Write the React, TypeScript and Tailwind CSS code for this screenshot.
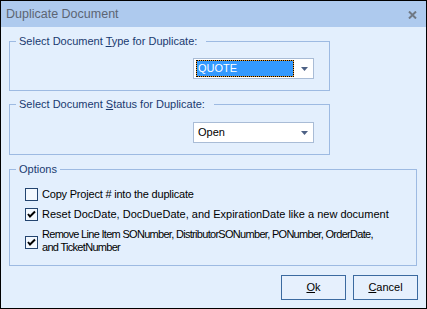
import React from "react";

const font = { fontFamily: '"Liberation Sans", Arial, sans-serif' };

function Arrow() {
  return (
    <svg width="7" height="4" viewBox="0 0 7 4" className="block">
      <path d="M0 0 H7 L3.5 4 Z" fill="#4d6185" />
    </svg>
  );
}

function Check({ checked }: { checked: boolean }) {
  return (
    <div className="w-[13px] h-[13px] shrink-0 border border-[#23446f] bg-[#f3f8fe] flex items-center justify-center">
      {checked && (
        <svg width="9" height="9" viewBox="0 0 9 9" className="block">
          <path d="M1 4 L3 6.5 L8 1.5" stroke="#000" strokeWidth="2" fill="none" />
        </svg>
      )}
    </div>
  );
}

export default function App() {
  return (
    <div
      className="w-[427px] h-[309px] border border-black bg-[#e3effd] flex flex-col text-[11px] leading-[13px]"
      style={font}
    >
      <div className="h-[26px] shrink-0 bg-[#aecaee] flex items-center justify-between pl-[5px] pr-[9px]">
        <span className="text-[12.5px] text-[#5c6573] pt-[1px]">Duplicate Document</span>
        <svg width="9" height="8" viewBox="0 0 9 8" className="block mt-[1px]">
          <path d="M1 0.5 L8 7.5 M8 0.5 L1 7.5" stroke="#6f7884" strokeWidth="2" />
        </svg>
      </div>

      <div className="flex flex-col pl-[8px] pr-[7px] pt-[8px]">
        <fieldset className="w-[321px] h-[56px] border border-[#9dbae2] px-[6px]">
          <legend className="pl-[3px] pr-[9px] text-[#1a3a70]">
            Select Document <span className="underline">T</span>ype for Duplicate:
          </legend>
          <div className="ml-[177px] mt-[10px] w-[121px] h-[21px] border border-[#a9bcd6] bg-white flex items-center pl-[2px] pr-[5px]">
            <div className="w-[98px] h-[17px] border border-dotted border-black bg-[#e89a2c]">
              <div className="w-full h-full bg-[#3399ff] text-white pl-[1px] leading-[15px]">QUOTE</div>
            </div>
            <div className="ml-auto">
              <Arrow />
            </div>
          </div>
        </fieldset>

        <fieldset className="mt-[7px] w-[321px] h-[57px] border border-[#9dbae2] px-[6px]">
          <legend className="pl-[3px] pr-[9px] text-[#1a3a70]">
            Select Document <span className="underline">S</span>tatus for Duplicate:
          </legend>
          <div className="ml-[177px] mt-[11px] w-[121px] h-[21px] border border-[#a9bcd6] bg-white flex items-center pl-[4px] pr-[5px]">
            <span className="text-black">Open</span>
            <div className="ml-auto">
              <Arrow />
            </div>
          </div>
        </fieldset>

        <fieldset className="mt-[8px] w-[408px] h-[103px] border border-[#9dbae2] px-[6px]">
          <legend className="pl-[3px] pr-[3px] text-[#1a3a70]">Options</legend>
          <div className="flex flex-col gap-[7px] pt-[12px] pl-[9px] text-black whitespace-nowrap">
            <div className="flex items-center gap-[4px]">
              <Check checked={false} />
              <span className="tracking-[-0.2px]">Copy Project # into the duplicate</span>
            </div>
            <div className="flex items-center gap-[4px]">
              <Check checked={true} />
              <span>Reset DocDate, DocDueDate, and ExpirationDate like a new document</span>
            </div>
            <div className="flex items-center gap-[4px]">
              <div className="mt-[3px]">
                <Check checked={true} />
              </div>
              <span className="tracking-[-0.7px]">
                Remove Line Item SONumber, DistributorSONumber, PONumber, OrderDate,
                <br />
                and TicketNumber
              </span>
            </div>
          </div>
        </fieldset>

        <div className="mt-[9px] flex justify-end gap-[7px] pr-[1px]">
          <button className="w-[65px] h-[25px] border border-[#3b6aa0] bg-[#e6f0fd] text-black text-[11px]" style={font}>
            <span className="underline">O</span>k
          </button>
          <button className="w-[65px] h-[25px] border border-[#3b6aa0] bg-[#e6f0fd] text-black text-[11px]" style={font}>
            <span className="underline">C</span>ancel
          </button>
        </div>
      </div>
    </div>
  );
}
